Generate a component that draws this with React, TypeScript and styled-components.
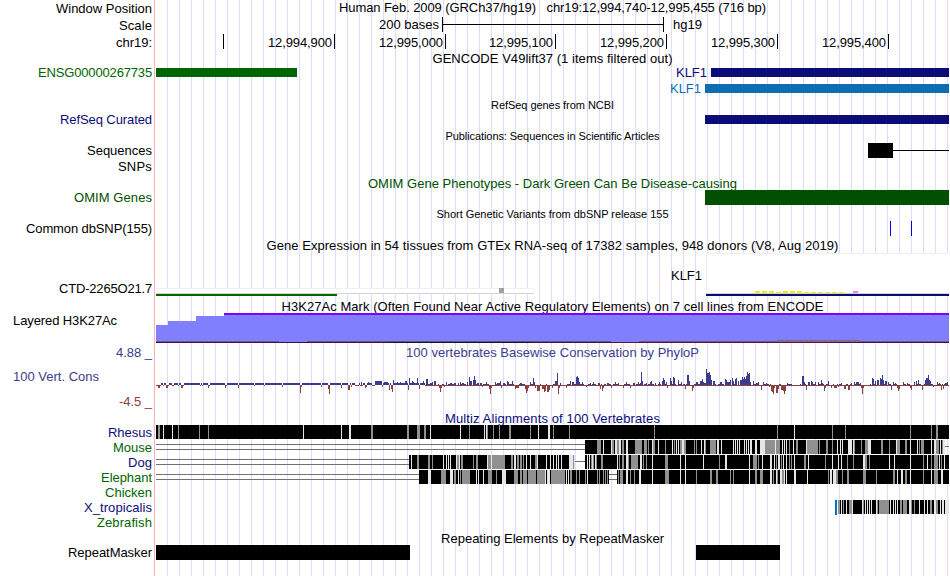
import * as React from 'react';
import styled, { createGlobalStyle } from 'styled-components';

const LANE_START = 156;
const LANE_WIDTH = 793;

const GlobalStyle = createGlobalStyle`
  body {
    margin: 0;
    background: #ffffff;
    overflow: hidden;
  }
`;

const Browser = styled.div`
  display: flex;
  flex-direction: column;
  width: 949px;
  height: 576px;
  font-family: 'Liberation Sans', Arial, Helvetica, sans-serif;
  font-size: 13px;
  line-height: 15px;
  color: #000000;
`;

const Track = styled.div<{ $height?: number }>`
  display: flex;
  gap: 1px;
  ${p => (p.$height ? `height: ${p.$height}px; flex: none;` : 'flex: 1;')}
`;

const Side = styled.div<{ $color?: string; $drop?: number; $left?: boolean }>`
  box-sizing: border-box;
  display: flex;
  flex-direction: column;
  align-items: ${p => (p.$left ? 'flex-start' : 'flex-end')};
  gap: 10px;
  width: 155px;
  flex: none;
  padding: ${p => p.$drop || 0}px 2px 0 13px;
  border-right: 1px solid #ffb0b0;
  color: ${p => p.$color || '#000000'};
`;

const Lane = styled.div`
  display: flex;
  width: ${LANE_WIDTH}px;
  flex: none;
  background: repeating-linear-gradient(
    to right,
    transparent 0 11px,
    #dcdcff 11px 12px
  );
`;

const Title = styled.div<{ $color?: string; $small?: boolean; $drop?: number }>`
  display: flex;
  justify-content: center;
  width: 100%;
  padding-top: ${p => p.$drop || (p.$small ? 1 : 0)}px;
  color: ${p => p.$color || '#000000'};
  font-size: ${p => (p.$small ? 11 : 13)}px;
`;

const Lead = styled.div<{ $to: number; $pad?: number; $color?: string }>`
  box-sizing: border-box;
  display: flex;
  justify-content: flex-end;
  flex: none;
  width: ${p => p.$to}px;
  padding-right: ${p => p.$pad || 0}px;
  color: ${p => p.$color || '#000000'};
`;

const Bar = styled.div<{ $width?: number; $thick: number; $color: string; $top?: number }>`
  ${p => (p.$width ? `width: ${p.$width}px; flex: none;` : 'flex: 1;')}
  height: ${p => p.$thick}px;
  margin-top: ${p => p.$top || 0}px;
  background: ${p => p.$color};
`;

const Ruler = styled.div`
  box-sizing: border-box;
  width: 222px;
  height: 15px;
  border-left: 1px solid #000000;
  border-right: 1px solid #000000;
  background: linear-gradient(#000000, #000000) 0 7px / 100% 1px no-repeat;
`;

const Tick = styled.div<{ $width: number }>`
  box-sizing: border-box;
  display: flex;
  justify-content: flex-end;
  flex: none;
  width: ${p => p.$width}px;
  height: 15px;
  padding: 1px 2px 0 0;
  border-right: 1px solid #000000;
`;

const Words = styled.span`
  display: inline-block;
  white-space: pre;
`;

const Drawing = styled.svg`
  display: block;
  flex: none;
  overflow: visible;
`;

// Spreads the letters so that the text takes the given width.
const Fit = ({ text, width }: { text: string; width: number }) => {
  const ref = React.useRef<HTMLSpanElement>(null);
  const [spacing, setSpacing] = React.useState(0);
  React.useLayoutEffect(() => {
    if (ref.current) {
      const natural = ref.current.getBoundingClientRect().width;
      setSpacing((width - natural) / text.length);
    }
  }, []);
  return (
    <Words ref={ref} style={{ letterSpacing: spacing }}>
      {text}
    </Words>
  );
};

// x starts at the lane offset, y counts from the top of the browser
const Plot = ({ top, height, children }: any) => (
  <Drawing
    width={LANE_WIDTH}
    height={height}
    viewBox={`${LANE_START} ${top} ${LANE_WIDTH} ${height}`}
    shapeRendering="crispEdges"
  >
    {children}
  </Drawing>
);

const SHADES: { [key: string]: string } = {
  g: '#909090',
  w: '#e6e6e6',
  k: '#000000',
};

const Stripes = ({ data, top }: { data: string; top: number }) => (
  <>
    {data
      .trim()
      .split(/\s+/)
      .map((item, i) => {
        const [, x, shade, w] = item.match(/^(\d+)([gwk])(\d*)$/) as string[];
        return (
          <rect key={i} x={x} y={top} width={w || 1} height="14" fill={SHADES[shade]} />
        );
      })}
  </>
);

const Gap = ({ from, to, top }: { from: number; to: number; top: number }) => (
  <>
    <rect x={from} y={top + 4} width={to - from} height="1" fill="#707070" />
    <rect x={from} y={top + 9} width={to - from} height="1" fill="#707070" />
  </>
);

const RHESUS = `156k793 158g2 163w 172w 178g 199g 208g 303w 341w 349w2 371g2 407g2 417g3
  424g2 430w 460w 469g 484w 486w 487g 493g 499g 509g2 530g 538w 548w2 553g 569g 654g
  777g 794w 832g 845g 910g 931g 936g2`;

const MOUSE = `585k360 597g4 603w 611w 612g2 615w2 617g2 619w2 622g2 626w2 635g7 644g3 648g
  652w 653g2 658w 665g 672w 674g 676w 678w 680g2 682w2 684g2 694g 696g 701w 704w 705g
  710g6 717w2 721w 733w 735w 737w 739w 744w 746w 748w 750w2 755w2 760w5 765g15 775w
  782w 784w 786w 789g 793w 796g2 806w 807g11 819g 826g2 832g 837w 840w 842w 848w
  849w3 853w 854g 861g 865g3 868w3 881g2 889g 896w 897g3 905g2 910w 917w 919g 921g3
  931w 934w2 936g3 940w 942g 943w2`;

const DOG = `409k166 411w 417g2 428g2 432g 443w 446w 448w 450w 456w 457g2 459w 461g2 473g
  476g2 487w 488g3 491w 492g13 511g2 514w2 517g2 520g2 523g 526w 530w 535g2 537w 546w
  550w 553w 556w 558w 561w 569w4 573g 574w 585k364 587w 589w 591g 592w 593g 595w 596g
  601g2 617w 619g 622g2 626w2 628g 631g3 634g4 640w2 643g 646g 652w 665g3 680w 685w
  703w 719g 725w2 749w 753g4 758g 762w 770w2 774w 776g 778w 779w 781g 783w 786w 789g
  791g 794w 804g2 808w 825g 832w 838w 841w 847g 853g 863w2 865g2 869g 889w 894w 910w
  923g 927w 931g 934g4 939w 941g 944w`;

const ELEPHANT = `419k190 428w3 441g5 450w3 454g2 458w 460g 462g8 476w 478w 483w 488g4 496g
  502w4 514g4 520g2 523g4 528g8 537g8 545w 547w3 551g14 566w 568w 570g2 576g 579g 585g
  587w 597g 599g 603g 605g 607g 617k332 618g 620g3 626w2 630g 634g 639w2 652w 665g4
  680w 685w 696g 710g2 716g2 730g 733g 749w 755g2 760g3 770w2 773g 776w 777g 780w2
  782g2 784w 786w 794w2 807w 828g 830w2 833w3 836g2 842g 847g2 863g3 876g 893g2 897w
  901w2 905g2 910w 923g 931w 934g4 941w2`;

const XTROP = `838k111 838g2 841w 843g 846w 849g3 852w 862w 863g 865w 867w 869w 871w 876w
  877g 879g10 890w 893w 895w 897w 900g2 903g4 909w2 911g 914g 919w 924w 927w 930g2
  934w2 936g2 940w 942w2 945w4`;

// pixel columns of the conservation signal: x,value[,width]
const PHYLOP = `156,2,269 156,-1,5 158,-3,2 162,2 163,-1 166,-3,2 168,-1 172,-1,2 178,-1 181,-3,2
  183,-1 200,-1 202,-1 208,-3 209,-1 225,-3 226,-1 238,-3 254,-1 264,-1 282,-2 300,-8
  301,-2 321,-2 329,-9 328,-4 341,-3 348,-5 349,-5 351,-2 355,-1,4 360,-1,3 365,-3 366,-2
  361,3 368,3 375,4,7 384,3,4 372,-1,3 382,-2 389,-5 391,-4 392,-7 393,5 397,3 400,3
  405,4 406,4 409,7 412,4 408,-5 413,3 417,7 419,-4 423,4 426,6,2 432,3 434,4,2
  430,2,3 439,-3 440,-7 441,-3 444,-2 446,3 450,2,2 454,2,2 458,2 460,3 466,-1,2
  462,2,2 467,3 469,8 470,4 471,4 473,5 474,9 475,5 477,2,2 480,2,3 482,-2 486,3
  489,-4 490,-9 491,-3 495,3 497,2,3 500,4 501,-3 503,2,2 507,4 508,3 512,4 515,-4
  516,-3,3 520,2,2 525,-4 526,-8 527,-6 528,-3 530,3 533,7 534,3 535,-3 537,-6,3 539,-3
  542,-4,2 544,-7 545,-6 547,-7,2 549,-5 552,-3 555,4 556,4 557,12 558,-9 559,-3 560,2
  566,-3 570,4 572,3,2 576,8 577,9 578,7 579,3 582,3 586,-2 590,2 593,3 598,2,2
  600,-4 602,-6 603,-3 607,2,2 611,-3 615,3 618,2 623,-3 626,3 630,-3 633,2,2 638,3
  640,2 641,13 642,4 646,2 650,3 651,4 655,2 659,3 662,4 663,7 664,5 666,3 667,-3
  670,7 671,4 673,8 674,7 678,5 681,3 685,-4 687,10 688,10 689,4 692,-6 693,-3 696,3,2
  700,4 701,4 702,6 703,3 704,2,2 706,16 707,12,3 710,10 709,13 711,5 713,4,2 717,-1
  720,3,2 725,6 726,5 727,3,3 730,5 732,7 733,4 735,6 736,7 738,4 740,5,2 742,8 743,6
  744,8 745,6 746,9 747,13 748,11 749,12 750,3 753,4 756,2,2 758,3 761,-5 763,3 766,2
  769,-2 771,-6 772,-7 773,-9 774,-3 776,-8,2 778,-4 781,-5,2 783,-6 784,-9 785,-6
  787,2 792,-1,4 797,-1,3 802,9,2 804,3 806,-5 808,3,2 811,4 812,3 815,3 818,3 821,5
  822,2 824,-6 825,-3 828,4 831,-3 834,-3,3 838,-2 841,2 844,-4,2 848,-5,2 851,2 854,3
  856,3,3 860,2 861,-3 862,-9 863,-3 866,-1,4 872,7 873,6 875,4 877,5 878,5 880,7
  881,6 882,10 883,5 885,4 886,4 888,3 891,-5 893,3 895,2 897,-3 898,-6 899,-4 903,3
  907,2 910,-3 911,-5 914,3 916,4 918,5 922,-5 925,5 926,7 927,7 928,10 929,5 930,4
  933,-2 937,3 939,2 941,-5 943,-4 945,2,2 947,3`;

const Conservation = () => (
  <Plot top={359} height={52}>
    <rect x="425" y="385" width="524" height="1" fill="#8b4040" />
    <path
      d="M426 384.5H949"
      stroke="#3c3c8c"
      strokeWidth="1"
      strokeDasharray="5 3 2 2 6 4 3 1 4 5"
    />
    {PHYLOP.split(/\s+/).map((item, i) => {
      const [x, v, w] = item.split(',').map(Number);
      return v > 0 ? (
        <rect key={i} x={x} y={385 - v} width={w || 1} height={v} fill="#3c3c8c" />
      ) : (
        <React.Fragment key={i}>
          <rect x={x} y="383" width={w || 1} height="2" fill="#ffffff" />
          <rect x={x} y="385" width={w || 1} height={-v} fill="#8b4040" />
        </React.Fragment>
      );
    })}
  </Plot>
);

const Acetylation = () => (
  <Plot top={313} height={32}>
    <path d="M156 343V325H168V321H196V316H224V313H949V343Z" fill="#8080ff" />
    <rect x="224" y="313" width="725" height="2" fill="#8000ff" />
    <rect x="156" y="341" width="123" height="1" fill="#705890" />
    <rect x="307" y="341" width="304" height="1" fill="#605880" />
    <rect x="639" y="341" width="310" height="1" fill="#705890" />
    <rect x="777" y="340" width="83" height="2" fill="#806888" />
    <rect x="156" y="342" width="793" height="1" fill="#3c1050" />
    <rect x="390" y="342" width="140" height="1" fill="#101030" />
    <rect x="611" y="342" width="222" height="1" fill="#601048" />
  </Plot>
);

const Expression = () => (
  <Plot top={253} height={46}>
    <rect x="156" y="288" width="378" height="6" fill="#ffffff" />
    <rect x="156" y="288" width="378" height="1" fill="#f0f0f0" />
    <rect x="156" y="293" width="378" height="1" fill="#d3d3d3" />
    <rect x="156" y="294" width="181" height="2" fill="#006400" />
    <rect x="499" y="288" width="5" height="5" fill="#a0a0a0" />
    <rect x="706" y="253" width="243" height="41" fill="#ffffff" />
    <rect x="706" y="253" width="243" height="1" fill="#f0f0f0" />
    <rect x="706" y="253" width="1" height="41" fill="#f0f0f0" />
    <rect x="706" y="293" width="243" height="1" fill="#d3d3d3" />
    <rect x="706" y="294" width="243" height="2" fill="#0c0c78" />
    {[2, 2, 2, 1, 2, 2, 2, 1, 1, 1, 1, 1, 1].map((h, i) => (
      <rect key={i} x={755 + i * 7} y={293 - h} width="5" height={h} fill="#eeee00" />
    ))}
    <rect x="853" y="291" width="5" height="2" fill="#ee82ee" />
    <text x="671" y="280" textLength="31">
      KLF1
    </text>
  </Plot>
);

const Species = ({ name, width, color, children }: any) => (
  <Track $height={15}>
    <Side $color={color}>
      <Fit text={name} width={width} />
    </Side>
    <Lane>{children}</Lane>
  </Track>
);

const Heading = ({ text, width, height, color, small, drop, side }: any) => (
  <Track $height={height}>
    {side || <Side />}
    <Lane>
      <Title $color={color} $small={small} $drop={drop}>
        <Fit text={text} width={width} />
      </Title>
    </Lane>
  </Track>
);

const NAVY = '#0c0c78';
const GREEN = '#006400';
const BLUE = '#3c3c8c';

const App = () => (
  <>
    <GlobalStyle />
    <Browser>
      <Heading
        height={17}
        width={427}
        text={'Human Feb. 2009 (GRCh37/hg19)\u00a0\u00a0 chr19:12,994,740-12,995,455 (716 bp)'}
        side={
          <Side $drop={1}>
            <Fit text="Window Position" width={96} />
          </Side>
        }
      />
      <Track $height={17}>
        <Side $drop={1}>
          <Fit text="Scale" width={33} />
        </Side>
        <Lane>
          <Lead $to={286} $pad={3}>
            <Fit text="200 bases" width={60} />
          </Lead>
          <Ruler />
          <Lead $to={38}>
            <Fit text="hg19" width={29} />
          </Lead>
        </Lane>
      </Track>
      <Track $height={17}>
        <Side $drop={1}>
          <Fit text="chr19:" width={36} />
        </Side>
        <Lane>
          <Tick $width={68} />
          {[111, 111, 110, 111, 111, 111].map((w, i) => (
            <Tick key={i} $width={w}>
              <Fit text={`12,99${i ? 5 : 4},${i ? i - 1 : 9}00`} width={64} />
            </Tick>
          ))}
        </Lane>
      </Track>
      <Heading height={14} width={240} text="GENCODE V49lift37 (1 items filtered out)" />
      <Track $height={16}>
        <Side $color={GREEN}>
          <Fit text="ENSG00000267735" width={114} />
        </Side>
        <Lane>
          <Bar $width={141} $thick={9} $top={3} $color={GREEN} />
          <Lead $to={414} $pad={4} $color={NAVY}>
            <Fit text="KLF1" width={31} />
          </Lead>
          <Bar $thick={9} $top={3} $color={NAVY} />
        </Lane>
      </Track>
      <Track $height={16}>
        <Side />
        <Lane>
          <Lead $to={549} $pad={4} $color="#0c6eb0">
            <Fit text="KLF1" width={31} />
          </Lead>
          <Bar $thick={9} $top={3} $color="#0c6eb0" />
        </Lane>
      </Track>
      <Heading height={15} width={123} small text="RefSeq genes from NCBI" />
      <Track $height={16}>
        <Side $color={NAVY}>
          <Fit text="RefSeq Curated" width={92} />
        </Side>
        <Lane>
          <Lead $to={549} />
          <Bar $thick={9} $top={3} $color={NAVY} />
        </Lane>
      </Track>
      <Heading
        height={15}
        width={214}
        small
        text="Publications: Sequences in Scientific Articles"
      />
      <Track $height={16}>
        <Side>
          <Fit text="Sequences" width={65} />
        </Side>
        <Lane>
          <Lead $to={712} />
          <Bar $width={25} $thick={15} $color="#000000" />
          <Bar $thick={1} $top={7} $color="#000000" />
        </Lane>
      </Track>
      <Track $height={17}>
        <Side>
          <Fit text="SNPs" width={34} />
        </Side>
        <Lane />
      </Track>
      <Heading
        height={14}
        width={369}
        color="#005000"
        text="OMIM Gene Phenotypes - Dark Green Can Be Disease-causing"
      />
      <Track $height={16}>
        <Side $color="#005000">
          <Fit text="OMIM Genes" width={78} />
        </Side>
        <Lane>
          <Lead $to={549} />
          <Bar $thick={15} $color="#005000" />
        </Lane>
      </Track>
      <Heading
        height={15}
        width={232}
        small
        text="Short Genetic Variants from dbSNP release 155"
      />
      <Track $height={17}>
        <Side>
          <Fit text="Common dbSNP(155)" width={126} />
        </Side>
        <Lane>
          <Lead $to={734} />
          <Bar $width={1} $thick={15} $color="#0000e0" />
          <Lead $to={20} />
          <Bar $width={1} $thick={15} $color="#0000e0" />
        </Lane>
      </Track>
      <Heading
        height={15}
        width={572}
        text="Gene Expression in 54 tissues from GTEx RNA-seq of 17382 samples, 948 donors (V8, Aug 2019)"
      />
      <Track $height={46}>
        <Side $drop={28}>
          <Fit text="CTD-2265O21.7" width={93} />
        </Side>
        <Lane>
          <Expression />
        </Lane>
      </Track>
      <Heading
        height={14}
        width={542}
        text="H3K27Ac Mark (Often Found Near Active Regulatory Elements) on 7 cell lines from ENCODE"
      />
      <Track $height={31}>
        <Side $left>
          <Fit text="Layered H3K27Ac" width={104} />
        </Side>
        <Lane>
          <Acetylation />
        </Lane>
      </Track>
      <Heading
        height={15}
        width={293}
        color={BLUE}
        drop={1}
        text="100 vertebrates Basewise Conservation by PhyloP"
        side={
          <Side $color={BLUE} $drop={1}>
            <Fit text="4.88 _" width={36} />
          </Side>
        }
      />
      <Track $height={52}>
        <Side $color={BLUE} $left $drop={10}>
          <Fit text="100 Vert. Cons" width={86} />
          <Lead $to={139} $color="#8b4040">
            <Fit text="-4.5 _" width={33} />
          </Lead>
        </Side>
        <Lane>
          <Conservation />
        </Lane>
      </Track>
      <Heading height={14} width={215} color={NAVY} text="Multiz Alignments of 100 Vertebrates" />
      <Species name="Rhesus" width={44} color={NAVY}>
        <Plot top={425} height={15}>
          <Stripes data={RHESUS} top={425} />
        </Plot>
      </Species>
      <Species name="Mouse" width={39} color={GREEN}>
        <Plot top={440} height={15}>
          <Gap from={156} to={585} top={440} />
          <Stripes data={MOUSE} top={440} />
          <rect x="945" y="446" width="4" height="1" fill="#707070" />
        </Plot>
      </Species>
      <Species name="Dog" width={24} color={NAVY}>
        <Plot top={455} height={15}>
          <Gap from={156} to={409} top={455} />
          <Stripes data={DOG} top={455} />
          <rect x="575" y="461" width="10" height="1" fill="#707070" />
        </Plot>
      </Species>
      <Species name="Elephant" width={51} color={GREEN}>
        <Plot top={470} height={15}>
          <Gap from={156} to={419} top={470} />
          <Gap from={609} to={617} top={470} />
          <Stripes data={ELEPHANT} top={470} />
        </Plot>
      </Species>
      <Species name="Chicken" width={47} color={GREEN} />
      <Species name="X_tropicalis" width={68} color={NAVY}>
        <Plot top={500} height={15}>
          <rect x="835" y="500" width="2" height="15" fill="#0070c0" />
          <Stripes data={XTROP} top={500} />
        </Plot>
      </Species>
      <Track $height={16}>
        <Side $color={GREEN}>
          <Fit text="Zebrafish" width={55} />
        </Side>
        <Lane />
      </Track>
      <Heading height={14} width={223} text="Repeating Elements by RepeatMasker" />
      <Track>
        <Side>
          <Fit text="RepeatMasker" width={84} />
        </Side>
        <Lane>
          <Bar $width={254} $thick={15} $color="#000000" />
          <Lead $to={286} />
          <Bar $width={84} $thick={15} $color="#000000" />
        </Lane>
      </Track>
    </Browser>
  </>
);

export default App;
